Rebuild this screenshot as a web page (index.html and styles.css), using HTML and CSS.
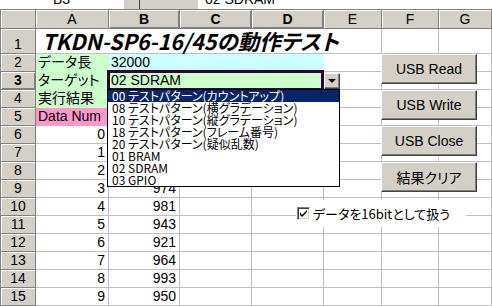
FILE: index.html
```html
<!DOCTYPE html>
<html lang="ja">
<head>
  <meta charset="UTF-8">
  <title>TKDN-SP6-16/45の動作テスト</title>
  <link rel="stylesheet" href="styles.css">
</head>
<body>
<div class="window">
  <div class="formula">
    <div class="namebox"><span>B3</span></div>
    <div class="namebtn"></div>
    <div class="eq"><span>=</span></div>
    <div class="fx"><span>02 SDRAM</span></div>
  </div>

  <div class="sheet">
    <div class="hd corner"></div><div class="hd">A</div><div class="hd sel">B</div><div class="hd sel">C</div><div class="hd sel">D</div><div class="hd">E</div><div class="hd">F</div><div class="hd">G</div>

    <div class="rh">1</div><div class="c title">TKDN-SP6-16/45の動作テスト</div><div class="c"></div><div class="c"></div>

    <div class="rh">2</div><div class="c green">データ長</div><div class="c cyan span3">32000</div><div class="c"></div><div class="c"></div><div class="c"></div>

    <div class="rh sel">3</div><div class="c green">ターゲット</div><div class="c green span3">02 SDRAM</div><div class="c"></div><div class="c"></div><div class="c"></div>

    <div class="rh">4</div><div class="c green">実行結果</div><div class="c"></div><div class="c"></div><div class="c"></div><div class="c"></div><div class="c"></div><div class="c"></div>

    <div class="rh">5</div><div class="c pink">Data Num</div><div class="c"></div><div class="c"></div><div class="c"></div><div class="c"></div><div class="c"></div><div class="c"></div>

    <div class="rh">6</div><div class="c n">0</div><div class="c"></div><div class="c"></div><div class="c"></div><div class="c"></div><div class="c"></div><div class="c"></div>
    <div class="rh">7</div><div class="c n">1</div><div class="c"></div><div class="c"></div><div class="c"></div><div class="c"></div><div class="c"></div><div class="c"></div>
    <div class="rh">8</div><div class="c n">2</div><div class="c"></div><div class="c"></div><div class="c"></div><div class="c"></div><div class="c"></div><div class="c"></div>
    <div class="rh">9</div><div class="c n">3</div><div class="c n">974</div><div class="c"></div><div class="c"></div><div class="c"></div><div class="c"></div><div class="c"></div>
    <div class="rh">10</div><div class="c n">4</div><div class="c n">981</div><div class="c"></div><div class="c"></div><div class="c"></div><div class="c"></div><div class="c"></div>
    <div class="rh">11</div><div class="c n">5</div><div class="c n">943</div><div class="c"></div><div class="c"></div><div class="c"></div><div class="c"></div><div class="c"></div>
    <div class="rh">12</div><div class="c n">6</div><div class="c n">921</div><div class="c"></div><div class="c"></div><div class="c"></div><div class="c"></div><div class="c"></div>
    <div class="rh">13</div><div class="c n">7</div><div class="c n">964</div><div class="c"></div><div class="c"></div><div class="c"></div><div class="c"></div><div class="c"></div>
    <div class="rh">14</div><div class="c n">8</div><div class="c n">993</div><div class="c"></div><div class="c"></div><div class="c"></div><div class="c"></div><div class="c"></div>
    <div class="rh">15</div><div class="c n">9</div><div class="c n">950</div><div class="c"></div><div class="c"></div><div class="c"></div><div class="c"></div><div class="c"></div>
  </div>

  <!-- selected cell and its list -->
  <div class="cursor"></div>
  <div class="dropbtn"><i></i></div>
  <ul class="listbox">
    <li class="on">00 テストパターン(カウントアップ)</li>
    <li>08 テストパターン(横グラデーション)</li>
    <li>10 テストパターン(縦グラデーション)</li>
    <li>18 テストパターン(フレーム番号)</li>
    <li>20 テストパターン(疑似乱数)</li>
    <li>01 BRAM</li>
    <li>02 SDRAM</li>
    <li>03 GPIO</li>
  </ul>

  <!-- sheet controls -->
  <div class="btn b1">USB Read</div>
  <div class="btn b2">USB Write</div>
  <div class="btn b3">USB Close</div>
  <div class="btn b4">結果クリア</div>

  <label class="chk">
    <span class="box">
      <svg width="7" height="7" viewBox="0 0 7 7"><path d="M0 2v3l2 2 5-5V0L2 5z" fill="#000"/></svg>
    </span>
    データを16bitとして扱う
  </label>
</div>
</body>
</html>
```

FILE: styles.css
```css
body {
    margin: 0;
    font-family: "Liberation Sans", "Noto Sans CJK JP", sans-serif;
    font-feature-settings: "palt";
    font-size: 14px;
    color: #000;
}

.window {
    position: relative;
    width: 492px;
    height: 306px;
    overflow: hidden;
    background: #fff;
}

/* formula bar, only its bottom edge is in view */
.formula {
    display: flex;
    height: 10px;
    box-sizing: border-box;
    border-bottom: 1px solid #808080;
    background: #d4d0c8;
    overflow: hidden;
}

.formula span {
    display: block;
    margin-top: -8px;
    line-height: 14px;
}

.namebox {
    width: 123px;
    background: #fff;
    text-align: center;
}

.namebtn {
    width: 15px;
    border-left: 1px solid #fff;
    border-right: 1px solid #404040;
}

.eq {
    width: 58px;
    text-align: center;
    font-weight: bold;
    font-size: 16px;
}

.eq span {
    margin-top: -9px;
}

.fx {
    flex: 1;
    background: #fff;
    padding-left: 7px;
}

/* grid */
.sheet {
    display: grid;
    grid-template-columns: 36px 73px 71px 72px 72px 58px 57px 1fr;
    grid-template-rows: 19px 25px repeat(14, 18px);
}

.hd, .rh {
    background: #d4d0c8;
    border-right: 1px solid #808080;
    border-bottom: 1px solid #808080;
    box-shadow: inset 1px 1px #fff;
    box-sizing: border-box;
    display: flex;
    justify-content: center;
    align-items: center;
    line-height: 17px;
}

.hd.corner {
    border-left: 1px solid #808080;
}

.rh {
    align-items: flex-end;
    border-left: 1px solid #808080;
}

.hd.sel, .rh.sel {
    font-weight: bold;
    box-shadow: inset 1px 1px #fff, inset -1px -1px #808080;
}

.c {
    border-right: 1px solid #c0c0c0;
    border-bottom: 1px solid #c0c0c0;
    box-sizing: border-box;
    padding: 0 3px 0 2px;
    line-height: 17px;
    white-space: nowrap;
    overflow: hidden;
}

.c.n {
    text-align: right;
}

.span3 {
    grid-column: span 3;
}

.green {
    background: #ccffcc;
    border-color: #ccffcc;
}

.cyan {
    background: #ccffff;
    border-color: #ccffff;
}

.pink {
    background: #ff99cc;
    border-color: #ff99cc;
}

.title {
    grid-column: span 5;
    font-family: "Noto Sans CJK JP", sans-serif;
    font-size: 21.5px;
    font-weight: bold;
    font-style: italic;
    line-height: 24px;
    padding-left: 6px;
    overflow: visible;
}

/* active cell */
.cursor {
    position: absolute;
    left: 107px;
    top: 70px;
    width: 217px;
    height: 21px;
    box-sizing: border-box;
    border: 3px solid #330033;
}

.dropbtn {
    position: absolute;
    left: 324px;
    top: 73px;
    width: 16px;
    height: 16px;
    box-sizing: border-box;
    background: #d4d0c8;
    border: 1px solid;
    border-color: #fff #404040 #404040 #fff;
    box-shadow: inset -1px -1px #808080;
    display: flex;
    justify-content: center;
    align-items: center;
}

.dropbtn i {
    border-top: 4px solid #000;
    border-left: 4px solid transparent;
    border-right: 4px solid transparent;
}

.listbox {
    position: absolute;
    left: 107px;
    top: 89px;
    width: 233px;
    height: 98px;
    box-sizing: border-box;
    margin: 0;
    padding: 0;
    list-style: none;
    background: #fff;
    border: 1px solid #000;
    font-family: "Noto Sans CJK JP", sans-serif;
    font-size: 12px;
}

.listbox li {
    height: 12px;
    line-height: 12px;
    padding-left: 4px;
    white-space: nowrap;
}

.listbox li.on {
    background: #0a246a;
    color: #fff;
}

/* buttons on the sheet */
.btn {
    position: absolute;
    left: 381px;
    width: 96px;
    height: 30px;
    box-sizing: border-box;
    background: #d4d0c8;
    border: 1px solid;
    border-color: #fff #404040 #404040 #fff;
    box-shadow: inset -1px -1px #808080;
    display: flex;
    justify-content: center;
    align-items: center;
}

.b1 { top: 54px; }
.b2 { top: 90px; }
.b3 { top: 126px; }
.b4 { top: 162px; }

.chk {
    position: absolute;
    left: 296px;
    top: 200px;
    width: 170px;
    height: 27px;
    background: #fff;
    display: flex;
    align-items: center;
    gap: 3px;
    padding-left: 1px;
    box-sizing: border-box;
    font-family: "Noto Sans CJK JP", sans-serif;
    font-size: 13px;
}

.chk .box {
    width: 13px;
    height: 13px;
    box-sizing: border-box;
    border: 1px solid;
    border-color: #808080 #fff #fff #808080;
    box-shadow: inset 1px 1px #404040, inset -1px -1px #d4d0c8;
    background: #fff;
    display: flex;
    justify-content: center;
    align-items: center;
}
```
